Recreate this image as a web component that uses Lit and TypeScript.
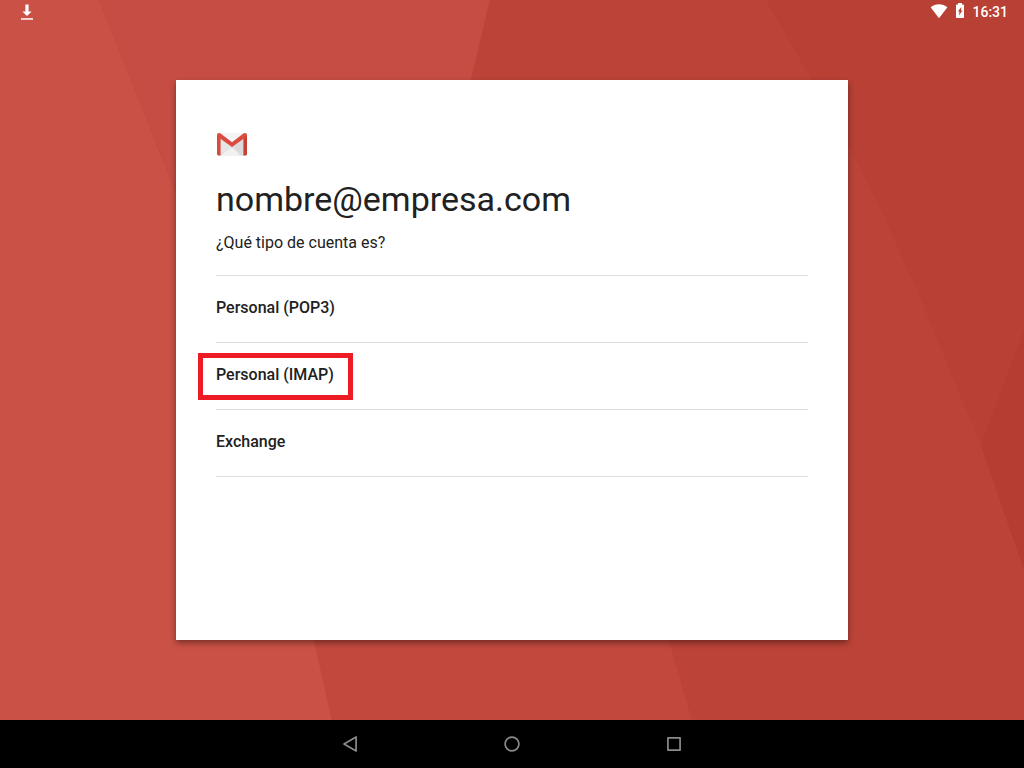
import { LitElement, html, css, svg } from "lit";
import { customElement, property, state } from "lit/decorators.js";
import { classMap } from "lit/directives/class-map.js";

@customElement("status-bar")
class StatusBar extends LitElement {
  @property() time = "";

  static styles = css`
    :host {
      display: flex;
      align-items: center;
      justify-content: space-between;
      height: 24px;
      padding: 0 16px;
      color: #fff;
      font: 500 14px/24px Roboto, sans-serif;
    }
    .side {
      display: flex;
      align-items: center;
    }
    svg {
      display: block;
      flex: none;
    }
    .download {
      margin-left: 2px;
    }
    .battery {
      margin: 0 6px;
    }
  `;

  render() {
    return html`
      <div class="side">
        <svg class="download" width="18" height="24" viewBox="0 0 18 24" role="img" aria-label="Descarga completada">
          <path d="M7.4 4.5h3.2v7h3L9 15.9l-4.6-4.4h3z" fill="#fff" />
          <path d="M3 18h12v1.9H3z" fill="#fff" fill-opacity=".8" />
        </svg>
      </div>
      <div class="side">
        <svg width="18" height="24" viewBox="0 0 18 24" role="img" aria-label="Wi-Fi">
          <path d="M9 18.2.6 7.2C3 5.2 6 4.2 9 4.2s6 1 8.4 3z" fill="#fff" />
        </svg>
        <svg class="battery" width="12" height="24" viewBox="0 0 12 24" role="img" aria-label="Cargando">
          <path
            d="M4 3h4v1.6h1.3q.7 0 .7.7v12q0 .7-.7.7H2.7q-.7 0-.7-.7v-12q0-.7.7-.7H4z M7.4 7 3.8 11.4h1.7l-.6 4L8.5 10.6H7z"
            fill="#fff"
            fill-rule="evenodd"
          />
        </svg>
        <time>${this.time}</time>
      </div>
    `;
  }
}

@customElement("nav-bar")
class NavBar extends LitElement {
  static styles = css`
    :host {
      display: flex;
      justify-content: center;
      gap: 82px;
      height: 48px;
      background: #000;
    }
    button {
      width: 80px;
      padding: 0;
      border: 0;
      background: none;
      cursor: pointer;
    }
    svg {
      display: block;
      margin: 0 auto;
      fill: none;
      stroke: #8a8a8a;
      stroke-width: 1.7;
      stroke-linejoin: round;
    }
  `;

  render() {
    return html`
      <button aria-label="Atrás">
        <svg width="24" height="24" viewBox="0 0 24 24"><path d="M18.1 5v14L6 12z" /></svg>
      </button>
      <button aria-label="Inicio">
        <svg width="24" height="24" viewBox="0 0 24 24"><circle cx="12" cy="12" r="6.900" /></svg>
      </button>
      <button aria-label="Recientes">
        <svg width="24" height="24" viewBox="0 0 24 24"><rect x="5.900" y="5.900" width="12.200" height="12.200" /></svg>
      </button>
    `;
  }
}

const facets = svg`
  <path d="M0 0H99L139 100 176 193 314 640 332 720H0z" fill="#ca5145" />
  <path d="M99 0H490L471 80 314 640 176 193 139 100z" fill="#c64d43" />
  <path d="M314 640 471 80 669 640 692 720H332z" fill="#c2483d" />
  <path d="M490 0H1024V720H692L669 640 471 80z" fill="#bc4338" />
  <path d="M766 0H1024V570L981 445 962 400 917 290 881 210 851 151 812 80z" fill="#b84035" />
  <path d="M1024 330V570L981 445z" fill="#b63d32" />
`;

@customElement("app-root")
class AppRoot extends LitElement {
  @state() private selected = "Personal (IMAP)";

  private types = ["Personal (POP3)", "Personal (IMAP)", "Exchange"];

  static styles = css`
    :host {
      display: grid;
      grid-template-rows: 1fr auto;
      min-height: 100vh;
      font-family: Roboto, sans-serif;
      color: #212121;
    }
    .screen {
      position: relative;
      display: flex;
      flex-direction: column;
      background: #bc4338;
    }
    .facets {
      position: absolute;
      inset: 0;
      width: 100%;
      height: 100%;
    }
    status-bar,
    main {
      position: relative;
    }
    main {
      flex: 1;
      display: flex;
      justify-content: center;
      padding: 56px 24px 80px;
    }
    .card {
      box-sizing: border-box;
      width: 100%;
      max-width: 672px;
      padding: 48px 40px;
      background: #fff;
      box-shadow: 0 3px 6px rgba(0, 0, 0, 0.4);
    }
    .logo {
      display: block;
    }
    h1 {
      margin: 19px 0 0;
      font-size: 34px;
      font-weight: 400;
      line-height: 40px;
    }
    p {
      margin: 12px 0 20px;
      font-size: 16px;
      line-height: 24px;
    }
    ul {
      margin: 0;
      padding: 0;
      list-style: none;
      border-top: 1px solid #dedede;
    }
    li {
      border-bottom: 1px solid #dedede;
    }
    .type {
      display: block;
      width: 100%;
      padding: 20px 0 22px;
      border: 0;
      background: none;
      color: inherit;
      font: 500 16px/24px Roboto, sans-serif;
      text-align: left;
      cursor: pointer;
    }
    .label {
      position: relative;
      display: inline-block;
    }
    .marked::after {
      content: "";
      position: absolute;
      inset: -10px -19px -13px -18px;
      border: 5px solid #ed1c24;
    }
  `;

  render() {
    return html`
      <div class="screen">
        <svg class="facets" viewBox="0 0 1024 720" preserveAspectRatio="none" aria-hidden="true">${facets}</svg>
        <status-bar time="16:31"></status-bar>
        <main>
          <section class="card">
            <svg class="logo" width="32" height="32" viewBox="0 0 32 32" role="img" aria-label="Gmail">
              <path d="M3 5h26v22.5H3z" fill="#e6e6e6" />
              <path d="M4.5 27.5 16 17l11.5 10.5z" fill="#f1f1f1" />
              <path d="M4.5 5h23L16 14z" fill="#f5f5f5" />
              <path d="M16 18.5 27.4 10v17.500H24z" fill="#d4d4d4" fill-opacity=".6" />
              <path d="M4.500 27.300 14.500 19 16 20l1.500-1 10 8.300" fill="none" stroke="#d6d6d6" stroke-width=".7" />
              <path d="M4.600 27.600H2.600Q1 27.600 1 26V7l3.600 3z" fill="#d54c3f" />
              <path d="M27.400 27.600h2q1.600 0 1.600-1.600V7l-3.600 3z" fill="#c63f34" />
              <path d="M1 7q0-2 2-2 .8 0 1.500.6L16 14.200 27.500 5.600Q28.200 5 29 5q2 0 2 2 0 1.200-1 1.900L16 18.900 2 8.900Q1 8.200 1 7z" fill="#dd4b3e" />
            </svg>
            <h1>nombre@empresa.com</h1>
            <p>¿Qué tipo de cuenta es?</p>
            <ul>
              ${this.types.map(
                (t) => html`<li>
                  <button class="type" @click=${() => (this.selected = t)}>
                    <span class=${classMap({ label: true, marked: t === this.selected })}>${t}</span>
                  </button>
                </li>`
              )}
            </ul>
          </section>
        </main>
      </div>
      <nav-bar></nav-bar>
    `;
  }
}
